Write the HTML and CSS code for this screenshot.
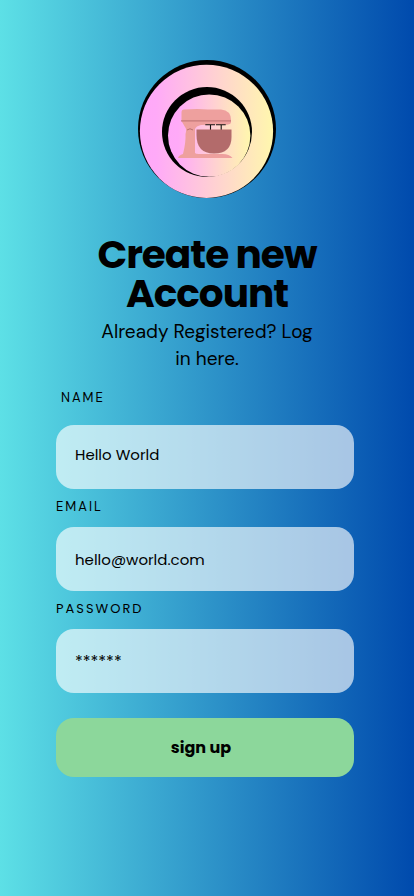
FILE: index.html
```html
<!DOCTYPE html>
<html lang="en">
<head>
<meta charset="utf-8">
<meta name="viewport" content="width=device-width, initial-scale=1">
<title>Create new Account</title>
<link rel="stylesheet" href="styles.css">
</head>
<body>
<main class="page">
  <svg class="logo" viewBox="0 0 138 138" role="img" aria-label="Stand mixer logo">
    <defs>
      <linearGradient id="ring"><stop offset="0" stop-color="#ffa9f9"/><stop offset=".12" stop-color="#ffaaf8"/><stop offset="1" stop-color="#fff7ad"/></linearGradient>
    </defs>
    <circle cx="69" cy="69" r="69" fill="#000"/>
    <circle cx="68.5" cy="71.3" r="66.6" fill="url(#ring)"/>
    <circle cx="69" cy="72" r="45" fill="#000"/>
    <circle cx="71.2" cy="75.6" r="41.2" fill="url(#ring)"/>
    <path fill="#eea09e" d="M46 49.500Q60 48.500 70 49.500H83Q93 50.500 93 60V61.300Q93.500 64.500 89 64.700Q74 64 63 65Q58 66 57 69V93Q57.500 94 61 94H83Q91 93.500 94.500 98H40Q40.500 95.500 45 94Q48 82 47.500 74Q49 69 47 67L43.500 61V52.500Q43.500 49.700 46 49.500Z"/>
    <path fill="none" stroke="#b36b6b" stroke-width=".9" d="M43 60.900H93M49 70Q52 67.500 55 70"/>
    <path fill="none" stroke="#15120f" stroke-width="1.100" d="M67.300 64.700H77M78 64.700H87.700M72.500 64.700V70M83.200 64.700V70"/>
    <path fill="#b36b6b" d="M58.500 69.600H93.500V77Q93.500 93.500 76 93.500Q58.500 93.500 58.500 75Z"/>
  </svg>
  <h1 class="title">Create new Account</h1>
  <p class="subtitle">Already Registered? Log in here.</p>
  <form class="form">
    <label class="label label-first" for="name">NAME</label>
    <input class="input" id="name" type="text" value="Hello World">
    <label class="label" for="email">EMAIL</label>
    <input class="input input-email" id="email" type="email" value="hello@world.com">
    <label class="label label-password" for="password">PASSWORD</label>
    <input class="input input-password" id="password" type="text" value="******">
    <button class="submit" type="submit">sign up</button>
  </form>
</main>
</body>
</html>
```
FILE: styles.css
```css
* {
  box-sizing: border-box;
}

body {
  margin: 0;
  min-height: 100vh;
  background: linear-gradient(90deg, #5de0e6, #004aad);
  color: #000;
  font-family: "DM Sans", Inter, sans-serif;
}

.page {
  display: flex;
  flex-direction: column;
  align-items: center;
  padding: 60px 0 40px;
}

.logo {
  width: 138px;
}

.title {
  max-width: 260px;
  margin: 37px 0 0;
  font: 700 39px/39px Poppins, Inter, sans-serif;
  letter-spacing: -1px;
  text-align: center;
}

.subtitle {
  max-width: 224px;
  margin: 5px 0 0;
  font-size: 19px;
  line-height: 27px;
  text-align: center;
}

.form {
  display: flex;
  flex-direction: column;
  align-self: stretch;
  padding: 16px 60px 0 56px;
}

.label {
  padding: 8px 0 10px;
  font-size: 13px;
  line-height: 20px;
  letter-spacing: 2px;
}

.label-first {
  padding: 0 5px 17px;
}

.label-password {
  font-family: Poppins, Inter, sans-serif;
}

.input {
  width: 100%;
  height: 64px;
  padding: 0 19px 6px;
  border: 0;
  border-radius: 18px;
  background: rgba(255, 255, 255, 0.64);
  color: #000;
  font: 400 15px/20px Poppins, Inter, sans-serif;
}

.input-email {
  padding-bottom: 0;
}

.input-password {
  padding-bottom: 0;
  font-size: 16px;
}

.submit {
  height: 59px;
  margin-top: 25px;
  padding: 0 8px 0 0;
  border: 0;
  border-radius: 18px;
  background: #8cd79b;
  color: #000;
  font: 700 16px/24px Poppins, Inter, sans-serif;
}
```
